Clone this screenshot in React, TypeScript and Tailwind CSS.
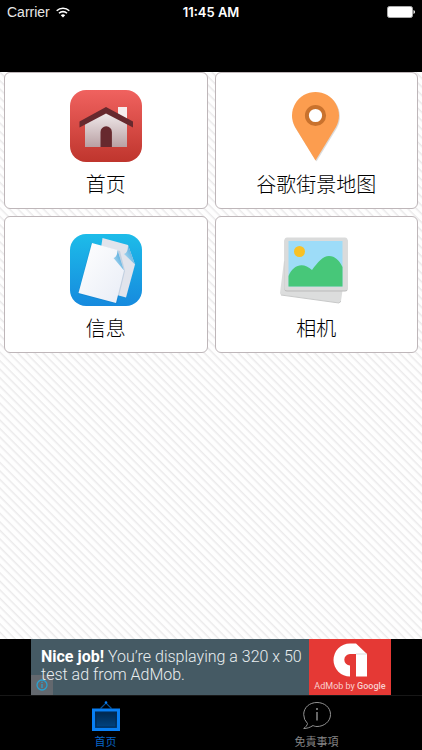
import type { ReactNode } from "react";

function HouseIcon() {
  return (
    <svg viewBox="0 0 72 72" className="size-[72px]" aria-hidden="true">
      <defs>
        <linearGradient id="houseBg" x1="0" y1="0" x2="0" y2="1">
          <stop offset="0" stopColor="#f0625f" />
          <stop offset="1" stopColor="#bf352d" />
        </linearGradient>
        <linearGradient id="houseWall" x1="0" y1="0" x2="0" y2="1">
          <stop offset="0" stopColor="#f3eeef" />
          <stop offset="1" stopColor="#b9a0a3" />
        </linearGradient>
      </defs>
      <rect width="72" height="72" rx="16" fill="url(#houseBg)" />
      <path d="M48 17h9v17l-9-5z" fill="#f6eded" />
      <path d="M15 34l21-13 21 13v23H15z" fill="url(#houseWall)" />
      <path d="M30.500 57V42a5.700 5.700 0 0 1 11.400 0v15z" fill="#67292e" />
      <path d="M36 17l27 14.500v6L36 23.500 9.500 37.500v-6z" fill="#67292e" />
    </svg>
  );
}

function PinIcon() {
  return (
    <svg viewBox="0 0 72 72" className="size-[72px]" aria-hidden="true">
      <path d="M36.500 71.500L15.500 38A23.700 23.700 0 1 1 57 38z" fill="#000" opacity=".14" />
      <path d="M35.500 70.500L15 37A23.500 23.500 0 1 1 56 37z" fill="#fc9d4f" />
      <circle cx="35.500" cy="25.500" r="8.600" fill="#fff" stroke="#c9722d" strokeWidth="4" />
    </svg>
  );
}

function PapersIcon() {
  return (
    <svg viewBox="0 0 72 72" className="size-[72px]" aria-hidden="true">
      <defs>
        <linearGradient id="paperBg" x1="0" y1="0" x2="0" y2="1">
          <stop offset="0" stopColor="#1dbce9" />
          <stop offset="1" stopColor="#168ade" />
        </linearGradient>
        <linearGradient id="paperFront" x1="0" y1="0" x2="1" y2="1">
          <stop offset="0" stopColor="#fff" />
          <stop offset="1" stopColor="#e9edf6" />
        </linearGradient>
        <linearGradient id="paperFold" x1="0" y1="1" x2="1" y2="0">
          <stop offset="0" stopColor="#c9e9f8" />
          <stop offset="1" stopColor="#2d95d3" />
        </linearGradient>
      </defs>
      <rect width="72" height="72" rx="16" fill="url(#paperBg)" />
      <path d="M32.500 4L58 11l7 19.500L56 63.500 25 55z" fill="#e1e4ec" />
      <path d="M58 11l7 19.500L54 20c3-1 4-4 4-9z" fill="url(#paperFold)" />
      <path d="M21 9l29 8 5 20-8 33-39-10z" fill="#0b5f9b" opacity=".14" />
      <path d="M22 9l25.500 7L54 36.500 46 69 8.500 59z" fill="url(#paperFront)" />
      <path d="M47.500 16L54 36.500 43.500 24c3-1 4-4 4-8z" fill="url(#paperFold)" />
    </svg>
  );
}

function PhotosIcon() {
  return (
    <svg viewBox="0 0 72 72" className="size-[72px]" aria-hidden="true">
      <path d="M4 27L0 59q0 2 2 2l57 8q2 0 2-2l2-14z" fill="#dcdddd" />
      <path d="M1 61l58 8 2-2" fill="none" stroke="#c8c9c9" />
      <rect x="4.500" y="4.500" width="63" height="53" rx="2.500" fill="#bbb" />
      <rect x="4.500" y="3.500" width="63" height="53" rx="2.500" fill="#dadbdb" />
      <path d="M8.500 7h54v45.500h-54z" fill="#9ddcf8" />
      <circle cx="19.500" cy="17.500" r="5.500" fill="#f8c126" />
      <path d="M8.500 42c5-12 15-14 23.500-6 6-8 11-14 17-14s10 4 13.500 11v19.500h-54z" fill="#47c779" />
    </svg>
  );
}

function Tile({ label, children }: { label: string; children: ReactNode }) {
  return (
    <button
      type="button"
      className="flex h-[137px] flex-col items-center rounded-md border border-[#beb6b9] bg-white pt-[17px] text-xl leading-7 font-light text-black"
    >
      {children}
      <span className="mt-[9px]">{label}</span>
    </button>
  );
}

function StatusBar() {
  return (
    <header className="grid h-[72px] grid-cols-3 items-start bg-black px-[7px] pt-1 font-['Inter','Liberation_Sans',sans-serif] text-[13px] leading-4 text-white">
      <div className="flex items-center gap-[6px] font-['Liberation_Sans',sans-serif] text-sm leading-4 text-[#e8e8e8]">
        Carrier
        <svg viewBox="0 0 14 11" className="h-[11px] w-[14px]" aria-label="Wi-Fi">
          <g fill="none" stroke="#fff" strokeWidth="1.600">
            <path d="M.700 3.800a9 9 0 0 1 12.600 0" />
            <path d="M3 6.300a5.700 5.700 0 0 1 8 0" />
          </g>
          <path d="M7 10.500L4.800 8.200a3.200 3.200 0 0 1 4.400 0z" fill="#fff" />
        </svg>
      </div>
      <time className="text-center font-semibold">11:45 AM</time>
      <svg viewBox="0 0 28 12" className="mt-[2px] h-3 w-7 justify-self-end" aria-label="Battery">
        <rect x=".500" y=".500" width="25" height="11" rx="2" fill="#fff" stroke="#aaa" />
        <path d="M26.500 4v4q1.500-.500 1.500-2t-1.500-2z" fill="#fff" />
      </svg>
    </header>
  );
}

function AdBanner() {
  return (
    <aside className="flex h-[56px] justify-center bg-black font-[Roboto,sans-serif]">
      <div className="relative w-[278px] bg-[#455a64] pt-[9px] pl-[10px] text-base leading-[18px] font-light whitespace-nowrap text-[#e9eef0]">
        <button type="button" aria-label="Ad info" className="absolute bottom-0 left-0 flex h-5 w-[22px] items-center justify-center bg-[#63686e]">
          <svg viewBox="0 0 12 12" className="size-3" fill="none" stroke="#2aa1d0" strokeWidth="1.300">
            <circle cx="6" cy="6" r="5" />
            <path d="M6 5v4M6 2.700v1.300" />
          </svg>
        </button>
        <p className="relative">
          <strong className="font-bold text-white">Nice job!</strong> You’re displaying a 320 x 50
          <br />
          test ad from AdMob.
        </p>
      </div>
      <div className="flex w-[82px] flex-col items-center bg-[#e53935] pt-1 text-white">
        <svg viewBox="0 0 34 34" className="size-[34px]" aria-hidden="true">
          <path d="M17 .500h6L34 11v22.500H23V11h-6a5.700 5.700 0 0 0 0 11.400v11.100A16.500 16.500 0 0 1 17 .500z" fill="#fff" />
          <path d="M23 11h11" stroke="#ccc" strokeWidth=".700" />
        </svg>
        <span className="mt-[3px] font-[Roboto,sans-serif] text-[9px] leading-3 text-[#f9d0cf]">
          AdMob by <span className="font-medium">Google</span>
        </span>
      </div>
    </aside>
  );
}

function TabBar() {
  return (
    <nav className="grid h-[55px] grid-cols-2 border-t border-[#171717] bg-black text-[11px] leading-4">
      <button type="button" aria-current="page" className="flex flex-col items-center gap-[3px] pt-[5px] text-[#0865c6]">
        <svg viewBox="0 0 28 30" className="h-[30px] w-7" aria-hidden="true">
          <defs>
            <linearGradient id="frameFill" x1="0" y1="0" x2="0" y2="1">
              <stop offset="0" stopColor="#002447" />
              <stop offset="1" stopColor="#004788" />
            </linearGradient>
          </defs>
          <path d="M8.500 7.500L14 2l5.500 5.500" fill="none" stroke="#075197" strokeWidth="1.200" />
          <circle cx="14" cy="1.500" r="1.300" fill="#087ff4" />
          <rect x="1.500" y="9" width="25" height="19.500" fill="url(#frameFill)" stroke="#087ff4" strokeWidth="3" />
          <rect x="4" y="11.500" width="20" height="14.500" fill="none" stroke="#002b56" />
        </svg>
        <span>首页</span>
      </button>
      <button type="button" className="flex flex-col items-center gap-[3px] pt-[5px] text-[#858585]">
        <svg viewBox="0 0 28 30" className="h-[30px] w-7" fill="none" stroke="#929292" aria-hidden="true">
          <path d="M4.500 22.500A12.500 12.500 0 0 1 .700 13.500C.700 6.500 6.500 1.500 14 1.500S27.500 6.500 27.500 13.500 21 25.500 14 25.500c-2 0-3-.500-4-1-3 2-6 3-9.300 3 2-1.500 3.500-3 3.800-5z" />
          <path d="M14 11v8.500" strokeWidth="1.400" />
          <circle cx="14" cy="8" r="1" fill="#929292" stroke="none" />
        </svg>
        <span>免責事項</span>
      </button>
    </nav>
  );
}

export default function App() {
  return (
    <div className="flex min-h-screen flex-col bg-white font-['Liberation_Sans','Noto_Sans_CJK_SC',sans-serif]">
      <StatusBar />
      <main className="flex-1 bg-[repeating-linear-gradient(45deg,#fefefe_0px,#fefefe_3px,#ebeaeb_5px,#fefefe_6px)]">
        <div className="grid grid-cols-2 gap-x-[7px] gap-y-[7px] px-1">
          <Tile label="首页"><HouseIcon /></Tile>
          <Tile label="谷歌街景地图"><PinIcon /></Tile>
          <Tile label="信息"><PapersIcon /></Tile>
          <Tile label="相机"><PhotosIcon /></Tile>
        </div>
      </main>
      <AdBanner />
      <TabBar />
    </div>
  );
}
